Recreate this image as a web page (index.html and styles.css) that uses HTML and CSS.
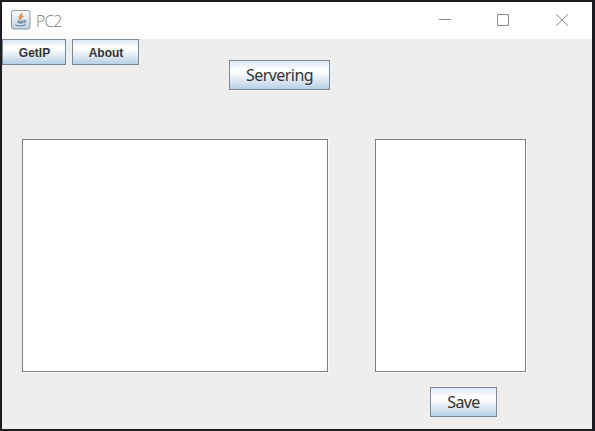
FILE: index.html
```html
<!DOCTYPE html>
<html lang="en">
<head>
<meta charset="utf-8">
<title>PC2</title>
<link rel="stylesheet" href="styles.css">
</head>
<body>
<div class="window">
  <header class="titlebar">
    <svg class="app-icon" viewBox="0 0 20 20">
      <defs>
        <linearGradient id="tile" x1="0" y1="0" x2="0" y2="1">
          <stop offset="0" stop-color="#fdfdfd"/>
          <stop offset="1" stop-color="#c3d0dc"/>
        </linearGradient>
      </defs>
      <rect x="0.5" y="0.5" width="18.5" height="18.5" rx="2" fill="url(#tile)" stroke="#8298ab"/>
      <path d="M10.8 3C11.6 5.2 7.2 6.2 8.2 8.2C8.5 8.9 9.3 9.5 9.5 10M12.4 5.9C10.2 6.9 9.8 7.8 10.7 8.8" fill="none" stroke="#e08a45" stroke-width="1.6"/>
      <path d="M6 10.2Q9.5 11.2 13 10.2L12.2 13.3Q9.5 14.2 6.8 13.3Z" fill="#7796b0"/>
      <path d="M13 10.5C15.6 10 15 12.4 12.8 12.7M4.500 14.300C5 16.300 13.500 16.300 14.500 14.300" fill="none" stroke="#6488a8" stroke-width="1.1"/>
    </svg>
    <span class="title">PC2</span>
    <svg class="controls" viewBox="0 0 132 14" fill="none" stroke="#8c8c8c">
      <path d="M0 6.5H12" />
      <path d="M58.500 1.500H69.500V12.500H58.500Z" />
      <path d="M117 1L129 13M129 1L117 13" />
    </svg>
  </header>
  <nav class="menu">
    <button class="button small get">GetIP</button>
    <button class="button small about">About</button>
  </nav>
  <main class="content">
    <button class="button serve"><span>Servering</span></button>
    <section class="panes">
      <div class="pane log"></div>
      <div class="pane list"></div>
    </section>
    <button class="button save"><span>Save</span></button>
  </main>
</div>
</body>
</html>
```
FILE: styles.css
```css
* { box-sizing: border-box; }
body { margin: 0; background: #17171a; }
.window {
  width: 595px;
  height: 431px;
  border: solid #1d1c20;
  border-width: 2px 3px 2px 2px;
  background: #eee;
  overflow: hidden;
}
.titlebar {
  display: flex;
  align-items: center;
  height: 37px;
  padding-left: 9px;
  background: #fff;
}
.app-icon { width: 20px; height: 20px; margin-top: -1px; }
.title {
  margin-left: 5px;
  font: 300 15.5px/20px "Open Sans", "Noto Sans", sans-serif;
  letter-spacing: -0.6px;
  color: #777;
}
.controls { width: 132px; height: 14px; margin: -1px 21px 0 auto; }
.menu { display: flex; gap: 6px; height: 26px; }
.button {
  display: flex;
  align-items: center;
  justify-content: center;
  height: 30px;
  padding: 0;
  border: 1px solid #7a8a99;
  border-radius: 0;
  background: linear-gradient(#dde8f3, #fff 32%, #f8fafc 45%, #b8cfe5);
  color: #333;
  font: 16px/20px "Noto Sans", sans-serif;
  white-space: nowrap;
}
.small {
  height: 26px;
  padding: 2px 0 0 1px;
  font: bold 12px/14px "Liberation Sans", sans-serif;
}
.get { width: 64px; }
.about { width: 67px; }
.content { display: flex; flex-direction: column; align-items: flex-start; }
.serve { width: 101px; margin: -5px 0 0 227px; letter-spacing: -0.55px; }
.panes { display: flex; gap: 47px; margin: 49px 0 0 20px; }
.pane {
  height: 233px;
  border: 1px solid #7a8087;
  background: #fff;
  box-shadow: 1px 1px #fafafa;
}
.log { width: 306px; }
.list { width: 151px; }
.save { width: 67px; margin: 15px 0 0 428px; letter-spacing: -0.6px; }
```
